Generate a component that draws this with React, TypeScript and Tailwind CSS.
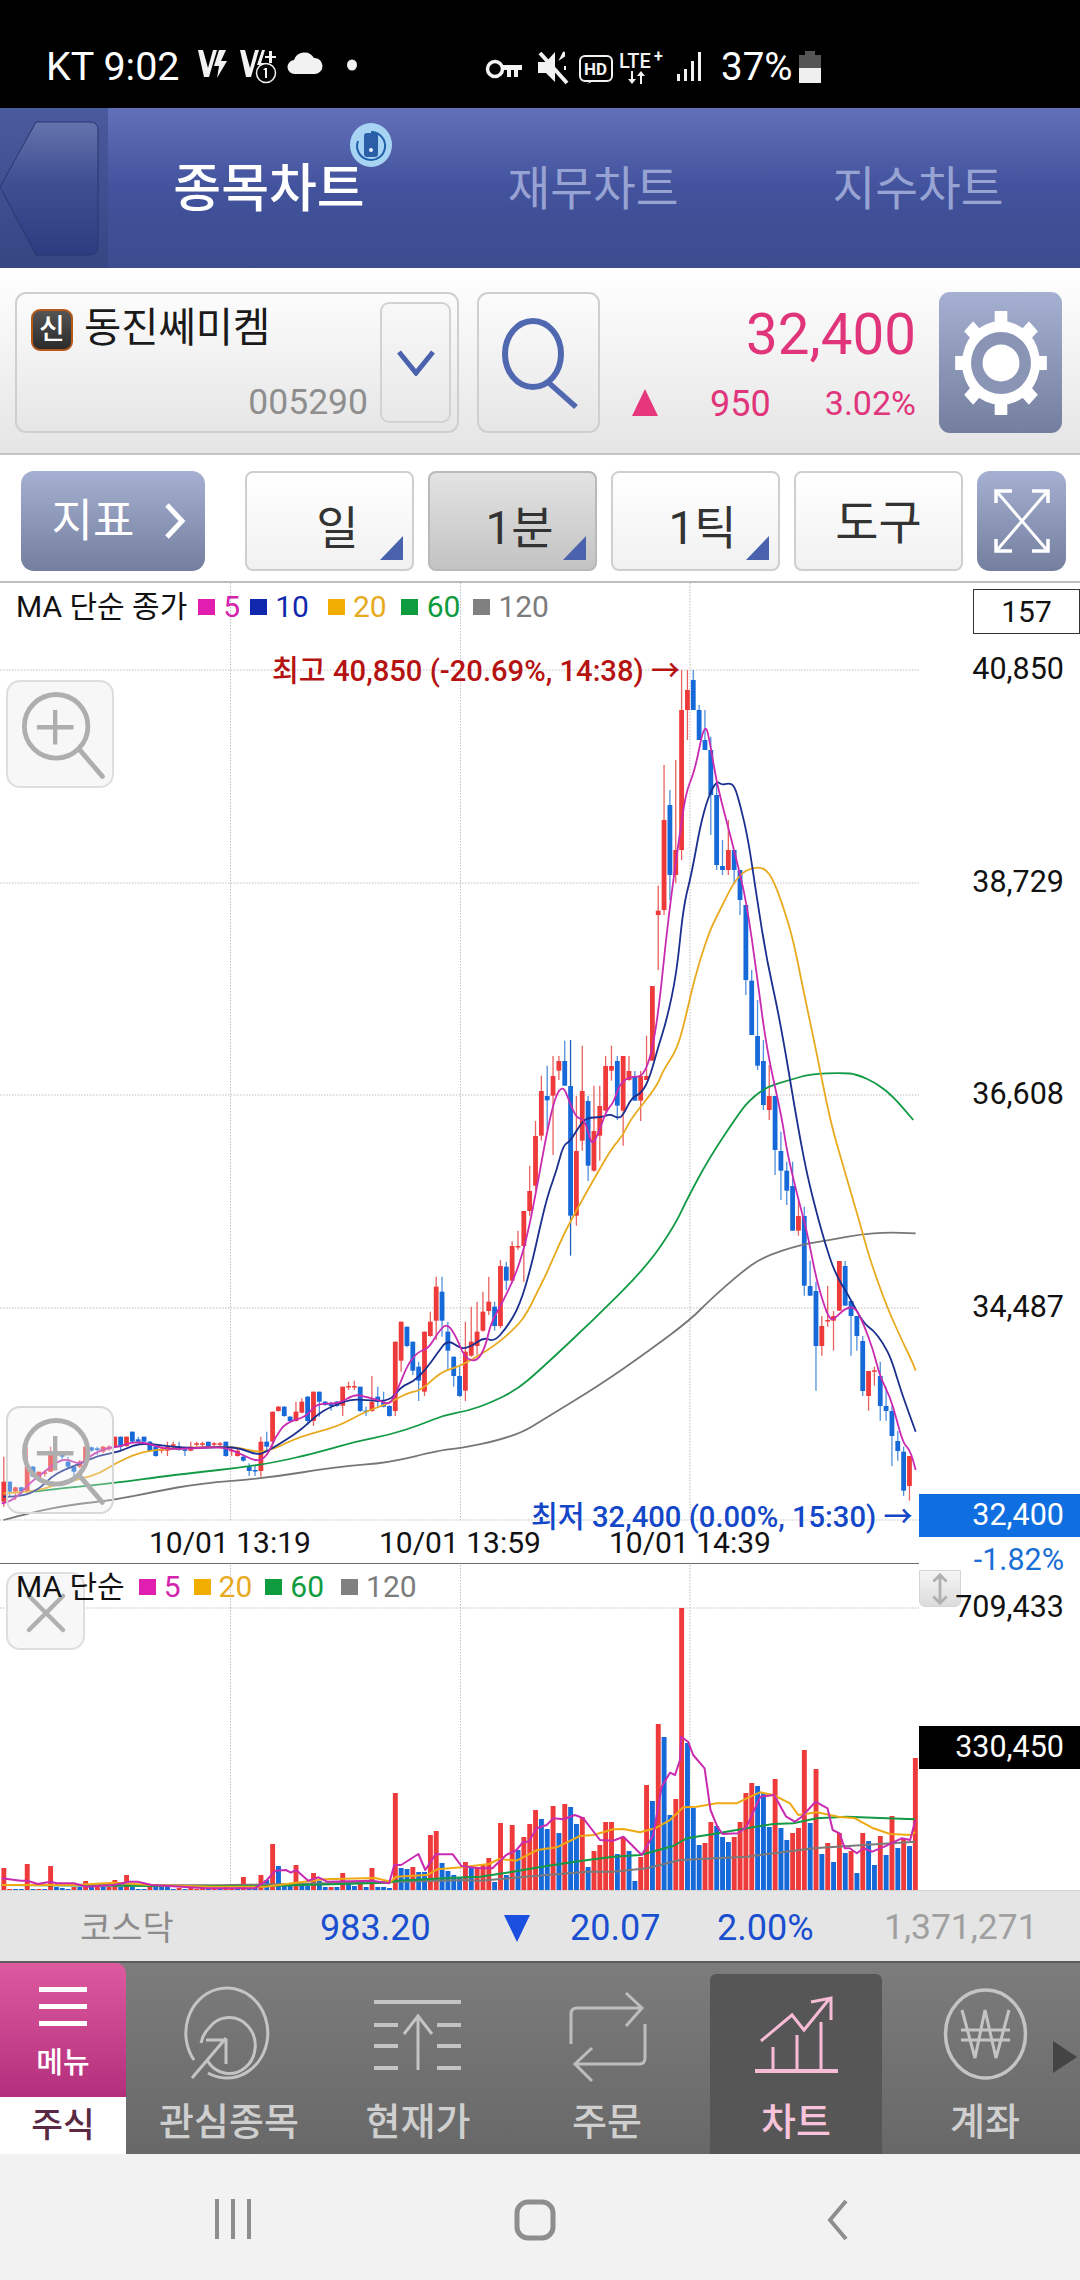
import React from 'react';

const FONT = "font-['Roboto','Noto_Sans_CJK_KR',sans-serif]";

// candle rows: [isRed, bodyTop, bodyBottom, wickTop, wickBottom], y = base + v / 3
type Row = [number, number, number, number, number];

const CANDLE_GROUPS: { base: number; rows: Row[] }[] = [
  {
    base: 1240,
    rows: [
      [1,725,785,650,800],[0,725,755,725,770],[1,742,755,740,780],[0,742,755,740,765],[1,680,755,620,760],
      [0,680,710,678,712],[1,695,715,695,720],[1,697,702,690,710],[1,637,695,620,695],[1,637,647,637,650],
      [0,637,650,637,660],[0,665,680,650,685],[0,680,695,680,710],[1,665,680,660,685],[1,620,665,620,670],
      [0,622,632,620,635],[0,625,630,620,645],[1,620,635,618,640],[1,620,628,615,632],[1,590,620,590,622],
      [0,590,620,590,630],[1,590,618,590,620],[0,575,605,575,608],[0,598,605,590,610],[0,590,605,590,608],
      [0,605,633,603,636],[0,620,648,618,650],[1,628,632,620,640],[1,620,632,605,648],[1,613,617,605,625],
      [0,620,630,605,632],[0,628,632,625,648],[1,620,632,605,634],[1,610,614,605,620],[1,610,614,605,620],
      [0,605,618,605,620],[1,610,614,606,618],[1,610,614,606,618],[0,605,648,605,650],[1,630,634,620,648],
      [1,632,648,625,650],[0,650,662,645,665],[0,680,693,670,708],[0,690,694,675,708],[1,605,693,590,710],
      [0,605,620,575,630],[1,515,605,515,620],[1,500,513,498,515],[0,500,528,498,530],[0,530,543,528,545],
      [1,515,543,485,545],[1,485,518,475,520],[0,470,543,468,555],[1,455,543,455,558],[0,455,485,455,530],
      [0,485,495,483,497],[0,490,498,485,512],[0,485,498,483,500],[1,440,497,440,528],[1,438,442,425,450],
      [1,438,442,422,450],[0,440,513,440,515],[0,512,516,500,528],[1,485,513,408,515],[0,470,485,440,500],
      [0,485,500,455,502],[0,498,528,496,530],[1,305,513,305,528],[1,245,362,245,395],[0,260,318,260,322],
      [0,305,392,305,405],[0,380,422,365,483],[1,275,455,275,468],[1,245,288,215,290],[1,140,242,110,300],
      [0,155,242,110,290],[0,275,332,245,390],[0,350,408,350,440],[0,408,468,380,470],[1,335,452,245,483],
      [1,305,347,200,350],[1,275,318,185,345],[1,215,272,155,275],[1,185,213,110,225],[0,200,258,185,272],
    ],
  },
  {
    base: 1020,
    rows: [
      [1,738,918,720,925],[0,740,782,725,810],[1,678,782,664,790],[1,678,682,632,690],[1,573,678,573,785],
      [1,513,573,437,587],[1,348,497,303,512],[1,213,347,167,362],[0,228,241,137,330],[1,168,227,108,405],
      [1,123,152,108,180],[0,123,197,62,197],[0,198,587,60,707],[1,393,587,228,617],[1,213,362,77,392],
      [0,243,437,228,483],[1,333,452,197,455],[1,258,347,197,422],[1,138,272,108,275],[1,138,152,77,182],
      [0,123,257,108,300],[1,108,272,108,377],[1,153,180,108,182],[0,168,242,153,242],[1,168,242,153,303],
      [1,168,180,47,180],
    ],
  },
  {
    base: 640,
    rows: [
      [1,1038,1262,1038,1262],[1,812,825,737,990],[1,540,810,375,825],[0,495,705,450,780],[1,630,705,360,730],
      [1,210,630,90,660],[1,150,210,90,300],[0,120,210,90,210],[0,210,300,195,300],[0,300,330,210,330],
      [0,330,465,290,585],[0,465,675,430,690],[0,678,690,600,705],[1,630,690,540,705],[0,630,690,630,730],
      [0,690,780,690,825],[0,795,1020,795,1065],[0,1022,1185,990,1185],[0,1188,1277,1080,1290],[0,1263,1395,1200,1410],
      [1,1368,1410,1275,1440],[0,1368,1530,1370,1605],
    ],
  },
  {
    base: 1100,
    rows: [
      [0,153,212,95,300],[0,212,272,185,315],[0,258,392,185,392],[1,348,392,302,407],[0,348,557,320,587],
      [0,558,587,482,587],[0,573,738,545,872],[1,678,738,648,767],[1,660,664,558,680],[1,648,662,633,752],
      [1,483,632,483,632],[0,498,617,483,617],[0,603,648,603,767],[0,648,708,648,752],[0,723,873,708,888],
      [1,813,888,813,932],[1,811,815,800,857],[0,828,918,785,962],[0,918,933,860,962],[0,933,1008,918,1098],
      [0,1023,1053,993,1082],[0,1055,1172,1040,1188],[1,1068,1158,1068,1202],
    ],
  },
];

const CANDLES = CANDLE_GROUPS.flatMap((g) =>
  g.rows.map((r) => ({
    red: r[0] === 1,
    top: g.base + r[1] / 3,
    bottom: g.base + r[2] / 3,
    wickTop: g.base + r[3] / 3,
    wickBottom: g.base + r[4] / 3,
  })),
);

// volume bar tops, minus = blue
const VOLUME_TOPS: number[] = [
  1868,1889,-1889,-1889,1864,-1889,1889,-1889,1866,-1887,-1888,-1889,1887,-1887,1881,-1887,1887,-1887,1887,1880,
  -1887,1875,-1887,-1889,-1889,1885,-1885,-1887,-1887,-1889,1888,-1889,1888,1889,1889,-1889,1889,-1889,1887,1888,
  -1887,1877,-1888,-1888,1875,-1880,1844,-1866,-1885,-1886,1865,-1883,-1886,1873,-1881,-1887,1887,-1887,1873,-1881,
  -1886,1881,-1887,1868,-1887,-1887,-1888,1793,-1868,-1869,1867,-1872,-1872,1835,1831,-1863,-1871,-1875,-1877,1862,
  -1867,1867,1865,1858,-1882,1823,-1875,1825,-1850,1837,1824,1810,-1819,-1829,1806,-1833,1804,-1807,-1824,1817,
  -1867,1851,1845,1822,1822,-1854,1837,-1851,-1881,1857,1785,-1801,1724,-1737,-1815,1799,1608,-1743,-1808,-1845,
  1843,1822,-1826,-1837,-1842,1837,1822,1793,1783,-1786,-1793,-1827,1779,-1828,-1840,1833,1828,1750,-1823,1769,
  -1854,1843,-1862,1833,-1853,1851,-1873,1833,-1841,-1865,1836,-1855,1816,-1848,1839,-1846,1758,
];

const barX = (i: number) => 3.8 + 5.843 * i;

// flat X,Y lists into "x,y" strings
const trace = (ox: number, sx: number, oy: number, list: number[]) => {
  const out: string[] = [];
  for (let i = 0; i < list.length; i += 2) {
    out.push(`${(ox + list[i] / sx).toFixed(1)},${(oy + list[i + 1] / 3).toFixed(1)}`);
  }
  return out.join(' ');
};

// rounds the corners of a point list with quadratic curves through the midpoints
const smooth = (points: string) => {
  const p = points.split(' ').map((s) => s.split(',').map(Number));
  let d = `M${p[0][0]} ${p[0][1]}`;
  for (let i = 1; i < p.length - 1; i++) {
    const mx = (p[i][0] + p[i + 1][0]) / 2;
    const my = (p[i][1] + p[i + 1][1]) / 2;
    d += `Q${p[i][0]} ${p[i][1]} ${mx.toFixed(1)} ${my.toFixed(1)}`;
  }
  const last = p[p.length - 1];
  return `${d}L${last[0]} ${last[1]}`;
};

const MA5 = [
  trace(0, 2.904, 1240, [5,790,30,785,60,760,90,725,130,695,165,665,195,657,235,675,270,640,320,622,350,620,385,605,430,610,480,628,560,625,650,620,700,642,745,665,775,650,800,590,830,548,890,530,915,495,950,490,985,490,1030,463,1060,470,1100,480,1130,495,1150,460,1185,370,1215,335,1245,325,1270,280,1298,248,1325,290,1350,355,1385,365,1410,320,1425,250,1460,185]),
  trace(400, 3, 1020, [340,780,365,710,390,610,415,480,440,340,465,230,490,195,510,250,530,295,555,298,575,380,595,340,620,270,640,250,660,190,690,170,735,170]),
  trace(500, 3, 640, [470,1170,505,830,545,540,560,450,585,390,615,240,632,320,650,430,680,545,710,660,740,790,770,1000,800,1230,845,1430]),
  trace(720, 3, 1100, [200,150,230,280,260,390,285,520,310,610,330,660,345,655,375,625,405,620,430,670,460,750,480,830,510,890,530,960,550,1030,570,1050,587,1110]),
].join(' ');

const MA10 = [
  trace(0, 2.904, 1240, [10,770,60,770,110,750,150,710,185,690,235,670,290,645,350,635,395,612,440,612,500,620,560,625,650,620,700,625,745,645,775,635,830,600,880,565,920,525,960,500,1020,478,1060,480,1130,485,1165,440,1200,425,1235,390,1270,340,1300,298,1340,328,1370,318,1405,292,1435,305,1470,265,1510,195,1545,70]),
  trace(400, 3, 1020, [420,620,445,520,470,450,490,375,510,365,540,315,560,293,605,292,630,282,655,295,670,285,695,232,725,220,750,170,775,80,800,0]),
  trace(500, 3, 640, [530,1000,550,800,575,700,600,560,625,470,650,422,665,435,685,430,703,435,722,500,745,600,770,770,800,960,840,1140,890,1440]),
  trace(720, 3, 1100, [260,220,290,340,315,430,345,520,385,585,430,670,460,690,490,730,515,780,545,880,587,995]),
].join(' ');

const MA20 = [
  trace(0, 2.904, 1240, [10,760,100,755,160,735,240,715,290,700,335,670,400,640,450,630,520,625,620,620,690,622,750,637,790,630,870,590,980,560,1060,515,1130,490,1180,460,1225,450,1280,395,1340,378,1440,315,1500,260,1530,220,1568,140]),
  trace(400, 3, 1020, [440,760,490,645,530,570,580,480,635,385,670,345,690,300,770,200,790,150,830,90,855,0]),
  trace(500, 3, 640, [575,1050,600,960,630,870,660,810,700,730,730,695,765,682,795,685,820,720,850,800,880,900,910,1050,950,1240,990,1440]),
  trace(720, 3, 1100, [370,200,420,370,450,480,500,620,550,730,570,770,587,812]),
].join(' ');

const MA60 = [
  trace(0, 2.904, 1240, [100,755,200,742,330,730,500,705,770,675,950,630,1030,605,1130,585,1220,555,1290,525,1360,512,1420,490,1500,450,1568,390]),
  trace(400, 3, 1020, [580,900,740,740,825,615,865,530,930,410,1020,275]),
  trace(500, 3, 640, [750,1380,800,1340,870,1320,930,1302,1030,1298,1070,1303,1130,1330,1180,1370,1240,1440]),
].join(' ');

const MA120 = [
  trace(0, 2.904, 1240, [10,840,100,815,200,795,330,780,450,755,580,730,770,715,980,680,1130,668,1280,630,1340,625,1450,600,1520,575,1568,545]),
  '600,1385 650,1350',
  trace(400, 3, 1020, [870,900,930,840,1020,760]),
  trace(720, 3, 1100, [130,470,240,435,340,418,420,403,500,397,587,400]),
].join(' ');

const VOL5 = [
  trace(0, 2.904, 1540, [5,1015,60,1022,79,1022,110,1032,147,1025,165,1030,215,1030,250,1040,330,1035,375,1025,400,1025,440,1035,600,1045,740,1045,770,1025,800,992,830,990,845,998,860,990,895,1022,925,1012,950,1025,1080,1022,1130,1030,1145,975,1165,975,1215,942,1235,990,1265,943,1315,943,1340,978,1390,985,1430,985,1470,945,1500,930,1520,905,1535,905]),
  trace(480, 3, 1760, [170,205,200,195,220,175,250,178,285,165,310,175,360,240,400,242,430,230,450,250,485,285,520,225,545,80,570,38,585,45,600,0]),
  trace(540, 2.904, 1540, [410,590,430,605,445,645,478,685,495,810,515,860,530,882,575,880,600,860,640,770,680,765,715,830,740,845,760,830,800,785,835,805,850,870,870,880,885,925,900,925,920,940,940,925,965,935,1000,920,1050,895,1075,900,1090,840]),
].join(' ');

const VOL20 = [
  trace(0, 2.904, 1540, [5,1035,220,1035,330,1028,440,1035,620,1040,770,1040,860,1028,940,1018,1090,1014,1135,1025,1150,1010,1240,1005,1270,988,1340,982,1420,972,1450,957,1500,962,1560,930]),
  trace(480, 3, 1760, [230,262,300,228,340,225,400,208,430,207,480,217,525,205,570,180,610,142,650,140,710,130,770,130,800,115,840,97,880,105,930,130,955,165,1010,157,1075,170,1125,175,1180,205,1230,222,1295,225,1305,215]),
].join(' ');

const VOL60 = [
  trace(0, 2.904, 1540, [5,1035,440,1038,770,1038,1130,1028,1150,1022,1350,1012]),
  trace(480, 3, 1760, [0,350,80,338,200,318,300,303,400,290,480,285,580,258,620,235,700,222,800,205,880,192,940,190,1010,175,1100,170,1200,174,1305,178]),
].join(' ');

const VOL120 = [
  trace(0, 2.904, 1540, [5,1035,640,1036,1130,1026,1350,1020]),
  trace(480, 3, 1760, [0,362,200,345,320,335,400,335,500,325,600,300,800,290,1000,265,1305,245]),
].join(' ');

function StatusBar() {
  return (
    <div className="flex h-[108px] items-center bg-black pl-[46px] pt-[26px] text-white">
      <span className="w-[150px] text-[39.5px] leading-none">KT 9:02</span>
      <svg viewBox="196 48 170 44" className="h-[44px] w-[170px]" fill="#f2f2f2">
        <path d="M198 53h5l5 18 5-18h4l-8 27h-5z" />
        <path d="M219 53h7l-5 11h6l-10 17 2-12h-5z" />
        <path d="M240 53h5l5 18 5-18h4l-8 27h-5z" />
        <path d="M262 53l-5 15h5l-5 9 9-11h-5l4-13z" />
        <path d="M269 54h3v5h4v2h-4v5h-3v-5h-4v-2h4z" />
        <circle cx="266" cy="76" r="9.5" fill="#000" stroke="#f2f2f2" strokeWidth="1.5" />
        <path d="M265 71h2v10h-2zM263 73l2-2v2z" />
        <path d="M295 77a7 7 0 0 1-1-14 11 11 0 0 1 20-2 8 8 0 0 1 1 16z" />
        <ellipse cx="352" cy="68" rx="5" ry="5.5" />
      </svg>
      <svg viewBox="486 44 226 46" className="ml-[117px] h-[46px] w-[226px]" fill="#f2f2f2">
        <circle cx="498" cy="69" r="7.5" fill="none" stroke="#f2f2f2" strokeWidth="3.5" />
        <path d="M505 65h20v5h-4v7h-4v-7h-3v7h-4v-7h-5z" />
        <path d="M541 62h8l9-10v30l-9-9h-8z" />
        <path d="M567 52v4l-3 2 3-6zM568 66v4" stroke="#f2f2f2" strokeWidth="2" />
        <path d="M543 53l27 30" stroke="#f2f2f2" strokeWidth="4" />
        <rect x="583" y="56" width="32" height="25" rx="5" fill="none" stroke="#f2f2f2" strokeWidth="2" />
        <path d="M590 84l5-4h4z" />
        <text x="587" y="75" fontSize="17" fontFamily="Roboto" fontWeight="700">HD</text>
        <text x="622" y="68" fontSize="20" fontFamily="Roboto" fontWeight="500">LTE</text>
        <text x="657" y="62" fontSize="16" fontFamily="Roboto" fontWeight="700">+</text>
        <path d="M634 71h2v8h3l-4 5-4-5h3zM643 84h2v-8h3l-4-5-4 5h3z" />
        <path d="M680 74h3v7h-3zM687 69h3v12h-3zM694 61h3v20h-3zM701 52h3v29h-3z" />
      </svg>
      <span className="ml-[12px] w-[78px] text-[38.5px] leading-none">37%</span>
      <div className="flex h-[32px] w-[22px] flex-col">
        <div className="mx-auto h-[5px] w-[10px] bg-[#555]" />
        <div className="h-[19px] bg-[#555]" />
        <div className="h-[21px] bg-[#efefef]" />
      </div>
    </div>
  );
}

function TabHeader() {
  return (
    <div className="flex h-[160px] bg-gradient-to-b from-[#6270b9] via-[#42529c] to-[#3c4c8f]">
      <div className="w-[108px] bg-gradient-to-b from-[#4a5a9e] to-[#354683]">
        <svg viewBox="0 108 108 160" className="h-[160px] w-[108px]">
          <defs>
            <linearGradient id="backBtn" x1="0" y1="0" x2="0" y2="1">
              <stop offset="0" stopColor="#6572ac" />
              <stop offset="0.45" stopColor="#3f4f92" />
              <stop offset="1" stopColor="#2b3d80" />
            </linearGradient>
          </defs>
          <path d="M0 187L36 122h54q8 0 8 8v117q0 8-8 8H36z" fill="url(#backBtn)" stroke="#2a3670" />
        </svg>
      </div>
      <div className="relative flex w-[322px] items-center justify-center pt-[3px] text-[52px] font-medium leading-none text-white">
        종목차트
        <svg viewBox="0 0 42 44" className="absolute left-[242px] top-[15px] h-[44px] w-[42px]">
          <ellipse cx="21" cy="22" rx="21" ry="22" fill="#a8d4f4" />
          <path d="M8 18a14 14 0 1 0 13-9" fill="none" stroke="#1f5ea8" strokeWidth="2" />
          <rect x="14" y="10" width="14" height="24" rx="3" fill="#2a5fa8" />
          <circle cx="21" cy="27" r="2" fill="#e8f2ff" />
        </svg>
      </div>
      <div className="flex w-[326px] items-center justify-center pt-[3px] text-[46.5px] leading-none text-[#97a3d2]">재무차트</div>
      <div className="flex w-[324px] items-center justify-center pt-[3px] text-[46.5px] leading-none text-[#97a3d2]">지수차트</div>
    </div>
  );
}

function StockRow() {
  return (
    <div className="flex h-[187px] items-start border-b-2 border-[#c4c4c4] bg-gradient-to-b from-white to-[#e5e5e5] pl-[15px] pt-[24px]">
      <div className="relative h-[141px] w-[444px] rounded-[11px] border-2 border-[#cfcfcf] bg-gradient-to-b from-[#fcfcfc] to-[#e6e6e6]">
        <div className="absolute left-[14px] top-[15px] flex h-[42px] w-[42px] items-center justify-center rounded-[9px] border-2 border-[#b5591a] bg-gradient-to-b from-[#555] to-[#2b2b2b] text-[28px] font-medium leading-none text-white">
          신
        </div>
        <span className="absolute left-[67px] top-[14px] text-[40.5px] leading-none text-[#1a1a1a]">동진쎄미켐</span>
        <span className="absolute right-[89px] top-[91px] text-[35.5px] leading-none text-[#8e8e8e]">005290</span>
        <div className="absolute left-[363px] top-[8px] flex h-[121px] w-[71px] items-center justify-center rounded-[9px] border-2 border-[#d2d2d2] bg-gradient-to-b from-[#f8f8f8] to-[#e8e8e8]">
          <svg viewBox="0 0 40 26" className="h-[26px] w-[40px]">
            <path d="M3 2l17 21L37 2" fill="none" stroke="#4a62ad" strokeWidth="5" />
          </svg>
        </div>
      </div>
      <div className="ml-[18px] flex h-[141px] w-[123px] items-center justify-center rounded-[11px] border-2 border-[#cfcfcf] bg-gradient-to-b from-[#fcfcfc] to-[#e6e6e6]">
        <svg viewBox="0 0 84 96" className="h-[96px] w-[84px]">
          <ellipse cx="36" cy="39" rx="28" ry="33" fill="none" stroke="#5068b0" strokeWidth="6" />
          <path d="M52 68l27 24" stroke="#5068b0" strokeWidth="5.5" />
        </svg>
      </div>
      <div className="relative h-[141px] w-[339px]">
        <span className="absolute right-[23px] top-[15px] text-[56.5px] leading-none text-[#e0357a]">32,400</span>
        <svg viewBox="0 0 26 27" className="absolute left-[32px] top-[97px] h-[27px] w-[26px]">
          <path d="M13 0l13 27H0z" fill="#e6377c" />
        </svg>
        <span className="absolute left-[110px] top-[94px] text-[36px] leading-none text-[#e0357a]">950</span>
        <span className="absolute right-[23px] top-[94px] text-[34px] leading-none text-[#e0357a]">3.02%</span>
      </div>
      <div className="flex h-[141px] w-[123px] items-center justify-center rounded-[11px] bg-gradient-to-b from-[#a6b0d2] to-[#747f9f]">
        <svg viewBox="-47 -53 94 106" className="h-[106px] w-[94px]">
          <g fill="#fff" transform="scale(0.95 1.08)">
            {[0, 45, 90, 135, 180, 225, 270, 315].map((a) => (
              <rect key={a} x="-6.5" y="-48" width="13" height="96" transform={`rotate(${a})`} />
            ))}
          </g>
          <ellipse rx="39" ry="42" fill="#fff" />
          <ellipse rx="30" ry="31" fill="#8a95b6" />
          <circle r="18.5" fill="#fff" />
        </svg>
      </div>
    </div>
  );
}

function Corner() {
  return (
    <svg viewBox="0 0 23 24" className="absolute bottom-[9px] right-[9px] h-[24px] w-[23px]">
      <path d="M23 0v24H0z" fill="#4a62ad" />
    </svg>
  );
}

function ToolRow() {
  return (
    <div className="flex h-[128px] items-start border-b-2 border-[#bdbdbd] bg-white pl-[21px] pt-[16px]">
      <div className="flex h-[100px] w-[184px] items-center justify-center gap-[30px] rounded-[13px] bg-gradient-to-b from-[#a6b0d2] to-[#747f9f] pl-[12px] text-white">
        <span className="text-[45px] leading-none">지표</span>
        <svg viewBox="0 0 22 36" className="h-[36px] w-[22px]">
          <path d="M3 2l15 16L3 34" fill="none" stroke="#fff" strokeWidth="5" />
        </svg>
      </div>
      <div className="relative ml-[40px] flex h-[100px] w-[169px] items-center justify-center rounded-[8px] border-2 border-[#cfcfcf] bg-gradient-to-b from-white to-[#f1f1f1] pl-[16px] pt-[14px] text-[46px] leading-none text-[#333]">
        일
        <Corner />
      </div>
      <div className="relative ml-[14px] flex h-[100px] w-[169px] items-center justify-center rounded-[8px] border-2 border-[#b9b9b9] bg-gradient-to-b from-[#e3e3e3] to-[#c3c3c3] pl-[14px] pt-[14px] text-[46px] leading-none text-[#333]">
        1분
        <Corner />
      </div>
      <div className="relative ml-[14px] flex h-[100px] w-[169px] items-center justify-center rounded-[8px] border-2 border-[#cfcfcf] bg-gradient-to-b from-white to-[#f1f1f1] pl-[14px] pt-[14px] text-[46px] leading-none text-[#333]">
        1틱
        <Corner />
      </div>
      <div className="ml-[14px] flex h-[100px] w-[169px] items-center justify-center rounded-[8px] border-2 border-[#cfcfcf] bg-gradient-to-b from-white to-[#f1f1f1] pt-[2px] text-[47px] leading-none text-[#333]">
        도구
      </div>
      <div className="ml-[14px] flex h-[100px] w-[89px] items-center justify-center rounded-[13px] bg-gradient-to-b from-[#a6b0d2] to-[#747f9f]">
        <svg viewBox="0 0 56 64" className="h-[64px] w-[56px]">
          <g fill="none" stroke="#fff" strokeWidth="3.5">
            <path d="M2 14V2h16M38 2h16v12M54 50v12H38M18 62H2V50" />
            <path d="M4 4l48 56M52 4L4 60" strokeWidth="3" />
          </g>
        </svg>
      </div>
    </div>
  );
}

function Grid({ ys, y1, y2 }: { ys: number[]; y1: number; y2: number }) {
  return (
    <g stroke="#bdbdbd" strokeWidth="1" strokeDasharray="1.5 1.5">
      {ys.map((y) => (
        <line key={y} x1="0" x2="919" y1={y} y2={y} />
      ))}
      {[230.5, 460.5, 690].map((x) => (
        <line key={x} x1={x} x2={x} y1={y1} y2={y2} />
      ))}
    </g>
  );
}

function Magnifier() {
  return (
    <svg viewBox="0 0 108 108" className="h-[104px] w-[104px]">
      <ellipse cx="50" cy="46" rx="33" ry="33" fill="none" stroke="#aeaeae" strokeWidth="5" />
      <path d="M30 47h38M49 29v36" stroke="#aeaeae" strokeWidth="4.5" />
      <path d="M74 70l24 28" stroke="#aeaeae" strokeWidth="5" strokeLinecap="round" />
    </svg>
  );
}

function PricePanel() {
  return (
    <div className="relative z-10 h-[981px] bg-white">
      <svg viewBox="0 583 1080 981" className="absolute inset-0 h-full w-full">
        <Grid ys={[670, 883, 1095, 1308, 1520]} y1={583} y2={1520} />
        {CANDLES.map((c, i) => {
          const x = barX(i);
          const dark = i === 97;
          return (
            <g key={i}>
              <line
                x1={x}
                x2={x}
                y1={c.wickTop}
                y2={c.wickBottom}
                stroke={c.red ? '#e8625f' : dark ? '#1b5fb8' : '#4f8fdc'}
                strokeWidth="1.3"
              />
              <rect
                x={x - 2.4}
                y={c.top}
                width="4.8"
                height={Math.max(c.bottom - c.top, 1.5)}
                fill={c.red ? '#ee3a3a' : '#1669d8'}
              />
            </g>
          );
        })}
        <g fill="none" strokeWidth="1.8" strokeLinejoin="round">
          <path d={smooth(MA120)} stroke="#777777" />
          <path d={smooth(MA60)} stroke="#129a45" />
          <path d={smooth(MA20)} stroke="#e8aa1f" />
          <path d={smooth(MA10)} stroke="#1b2f8e" />
          <path d={smooth(MA5)} stroke="#c92bb0" />
        </g>
        <line x1="0" x2="919" y1="1564" y2="1564" stroke="#6b6b6b" strokeWidth="2" />
      </svg>

      <div className="absolute left-[16px] top-[24px] flex -translate-y-1/2 items-center text-[30px] leading-none text-[#111]">
        <span className="mr-[11px]">MA 단순 종가</span>
        <span className="mr-[8px] h-[16px] w-[17px] bg-[#e01eb0]" />
        <span className="mr-[10px] text-[#d324ad]">5</span>
        <span className="mr-[8px] h-[16px] w-[17px] bg-[#0f28ae]" />
        <span className="mr-[19px] text-[#0f28ae]">10</span>
        <span className="mr-[8px] h-[16px] w-[17px] bg-[#f2ae00]" />
        <span className="mr-[14px] text-[#e8aa1f]">20</span>
        <span className="mr-[9px] h-[16px] w-[17px] bg-[#0e9c3e]" />
        <span className="mr-[13px] text-[#0e9c3e]">60</span>
        <span className="mr-[8px] h-[16px] w-[17px] bg-[#808080]" />
        <span className="text-[#7c7c7c]">120</span>
      </div>

      <div className="absolute left-[973px] top-[6px] flex h-[45px] w-[107px] items-center justify-center border border-[#333] bg-white text-[30px] leading-none text-[#111]">
        157
      </div>

      <span className="absolute left-[272px] top-[89px] -translate-y-1/2 whitespace-nowrap text-[29.2px] font-medium leading-none text-[#b51212]">
        최고 40,850 (-20.69%, 14:38) →
      </span>

      <div className="absolute left-[6px] top-[97px] flex h-[108px] w-[108px] items-center justify-center rounded-[14px] border-2 border-[#dedede] bg-[#f7f7f7]">
        <Magnifier />
      </div>
      <div className="absolute left-[6px] top-[823px] flex h-[108px] w-[108px] items-center justify-center rounded-[14px] border-2 border-[#d8d8d8] bg-[#eeeeee]/30">
        <Magnifier />
      </div>

      <span className="absolute right-[16px] top-[86px] -translate-y-1/2 text-[30.5px] leading-none text-[#111]">40,850</span>
      <span className="absolute right-[16px] top-[299px] -translate-y-1/2 text-[30.5px] leading-none text-[#111]">38,729</span>
      <span className="absolute right-[16px] top-[511px] -translate-y-1/2 text-[30.5px] leading-none text-[#111]">36,608</span>
      <span className="absolute right-[16px] top-[724px] -translate-y-1/2 text-[30.5px] leading-none text-[#111]">34,487</span>

      <span className="absolute left-[531px] top-[935px] -translate-y-1/2 whitespace-nowrap text-[29.2px] font-medium leading-none text-[#1447c8]">
        최저 32,400 (0.00%, 15:30) →
      </span>
      <div className="absolute left-[919px] top-[911px] flex h-[43px] w-[161px] items-center justify-end bg-[#0f6fe0] pr-[16px] text-[30.5px] leading-none text-white">
        32,400
      </div>
      <span className="absolute right-[16px] top-[977px] -translate-y-1/2 text-[30.5px] leading-none text-[#1a6fd6]">-1.82%</span>

      <span className="absolute left-[149px] top-[960px] -translate-y-1/2 whitespace-nowrap text-[30px] leading-none text-[#111]">10/01 13:19</span>
      <span className="absolute left-[379px] top-[960px] -translate-y-1/2 whitespace-nowrap text-[30px] leading-none text-[#111]">10/01 13:59</span>
      <span className="absolute left-[609px] top-[960px] -translate-y-1/2 whitespace-nowrap text-[30px] leading-none text-[#111]">10/01 14:39</span>
    </div>
  );
}

function VolumePanel() {
  return (
    <div className="relative h-[326px] bg-white">
      <svg viewBox="0 1564 1080 326" className="absolute inset-0 h-full w-full">
        <Grid ys={[1608]} y1={1565} y2={1890} />
        {VOLUME_TOPS.map((t, i) => (
          <rect
            key={i}
            x={barX(i) - 2.4}
            y={Math.abs(t)}
            width="4.9"
            height={1890 - Math.abs(t)}
            fill={t > 0 ? '#ee3a3a' : '#1669d8'}
          />
        ))}
        <g fill="none" strokeWidth="2" strokeLinejoin="round">
          <polyline points={VOL120} stroke="#7a7a7a" />
          <polyline points={VOL60} stroke="#129a45" />
          <polyline points={VOL20} stroke="#eeaa15" />
          <polyline points={VOL5} stroke="#c92bb0" />
        </g>
      </svg>

      <div className="absolute left-[6px] top-[8px] flex h-[78px] w-[79px] items-center justify-center rounded-[14px] border-2 border-[#dedede] bg-[#f7f7f7]">
        <svg viewBox="0 0 40 40" className="mt-[4px] h-[40px] w-[40px]">
          <path d="M3 3l34 34M37 3L3 37" stroke="#b0b0b0" strokeWidth="4.5" strokeLinecap="round" />
        </svg>
      </div>

      <div className="absolute left-[16px] top-[23px] flex -translate-y-1/2 items-center text-[30px] leading-none text-[#111]">
        <span className="mr-[14px]">MA 단순</span>
        <span className="mr-[8px] h-[16px] w-[17px] bg-[#e01eb0]" />
        <span className="mr-[13px] text-[#d324ad]">5</span>
        <span className="mr-[8px] h-[16px] w-[17px] bg-[#f2ae00]" />
        <span className="mr-[13px] text-[#e8aa1f]">20</span>
        <span className="mr-[8px] h-[16px] w-[17px] bg-[#0e9c3e]" />
        <span className="mr-[17px] text-[#0e9c3e]">60</span>
        <span className="mr-[8px] h-[16px] w-[17px] bg-[#808080]" />
        <span className="text-[#7c7c7c]">120</span>
      </div>

      <div className="absolute left-[919px] top-[6px] flex h-[37px] w-[42px] items-center justify-center rounded-b-[6px] border border-[#d4d4d4] bg-gradient-to-b from-[#f5f5f5] to-[#dcdcdc]">
        <svg viewBox="0 0 20 34" className="h-[32px] w-[20px]">
          <path d="M10 2v30M3 9l7-7 7 7M3 25l7 7 7-7" fill="none" stroke="#b0b0b0" strokeWidth="3" />
        </svg>
      </div>

      <span className="absolute right-[16px] top-[43px] -translate-y-1/2 text-[30.5px] leading-none text-[#111]">709,433</span>
      <div className="absolute left-[919px] top-[162px] flex h-[43px] w-[161px] items-center justify-end bg-black pr-[16px] text-[30.5px] leading-none text-white">
        330,450
      </div>
    </div>
  );
}

function IndexBar() {
  return (
    <div className="flex h-[71px] items-center border-t border-[#d4d4d4] bg-[#e5e5e5] pt-[4px] leading-none">
      <span className="ml-[80px] w-[102px] text-[34px] text-[#8c8c8c]">코스닥</span>
      <span className="ml-[138px] w-[112px] text-[36px] text-[#1a4fd0]">983.20</span>
      <svg viewBox="0 0 26 27" className="ml-[72px] h-[27px] w-[26px]">
        <path d="M0 0h26L13 27z" fill="#1a4fe0" />
      </svg>
      <span className="ml-[40px] w-[92px] text-[36px] text-[#1a4fd0]">20.07</span>
      <span className="ml-[55px] w-[98px] text-[36px] text-[#1a4fd0]">2.00%</span>
      <span className="ml-[69px] text-[35.5px] text-[#a0a0a0]">1,371,271</span>
    </div>
  );
}

function NavItem({ label, icon, active }: { label: string; icon: React.ReactNode; active?: boolean }) {
  return (
    <div className={`mx-[8.5px] flex w-[172px] flex-col items-center rounded-t-[6px] pt-[6px] ${active ? 'bg-[#565656]' : ''}`}>
      {icon}
      <span className={`flex h-[64px] items-center text-[38px] font-medium leading-none ${active ? 'text-[#f8c4dc]' : 'text-[#cfcfcf]'}`}>{label}</span>
    </div>
  );
}

function BottomNav() {
  return (
    <div className="relative flex h-[193px] border-t-2 border-[#5c5c5c] bg-gradient-to-b from-[#7c7c7c] to-[#686868]">
      <div className="flex w-[126px] flex-col">
        <div className="flex h-[134px] flex-col items-center rounded-tr-[10px] bg-gradient-to-b from-[#dd5aa0] to-[#b42e7c] pt-[24px] text-white">
          <div className="h-[5px] w-[48px] bg-white" />
          <div className="mt-[12px] h-[5px] w-[48px] bg-white" />
          <div className="mt-[12px] h-[5px] w-[48px] bg-white" />
          <span className="mt-[23px] text-[29px] font-medium leading-none">메뉴</span>
        </div>
        <div className="flex h-[57px] items-center justify-center bg-white text-[34.5px] font-medium leading-none text-[#5a2a45]">주식</div>
      </div>
      <div className="flex pl-[8.5px] pt-[11px]">
        <NavItem
          label="관심종목"
          icon={
            <svg viewBox="169 1980 120 110" className="h-[110px] w-[120px]" fill="none" stroke="#c4c4c4" strokeWidth="3">
              <path d="M194 2060a41 45 0 1 1 14 13" />
              <path d="M207 2060a26 28 0 1 0 2-32 26 28 0 0 0-8 15" />
              <path d="M192 2078l34-40M206 2040h20v24" />
            </svg>
          }
        />
        <NavItem
          label="현재가"
          icon={
            <svg viewBox="358 1980 120 110" className="h-[110px] w-[120px]" fill="none" stroke="#c4c4c4" strokeWidth="4">
              <path d="M374 2002h87M374 2025h24M437 2025h24M374 2046h24M437 2046h24M374 2068h24M437 2068h24" />
              <path d="M418 2070v-54M404 2034l14-18 14 18" strokeWidth="3" />
            </svg>
          }
        />
        <NavItem
          label="주문"
          icon={
            <svg viewBox="547 1980 120 110" className="h-[110px] w-[120px]" fill="none" stroke="#bdbdbd" strokeWidth="3">
              <path d="M571 2044v-30q0-6 6-6h65M626 1993l16 15-16 18" />
              <path d="M645 2024v34q0 6-6 6h-63M592 2048l-17 16 17 17" />
            </svg>
          }
        />
        <NavItem
          active
          label="차트"
          icon={
            <svg viewBox="736 1980 120 110" className="h-[110px] w-[120px]" fill="none" stroke="#f6bcd6" strokeWidth="3">
              <path d="M755 2071h83" strokeWidth="4" />
              <path d="M773 2047v24M797 2035v36M821 2022v49" />
              <path d="M761 2041l31-26 12 15 26-32M811 2002l20-4v22" />
            </svg>
          }
        />
        <NavItem
          label="계좌"
          icon={
            <svg viewBox="925 1980 120 110" className="h-[110px] w-[120px]" fill="none" stroke="#c4c4c4" strokeWidth="3.5">
              <ellipse cx="985.5" cy="2034" rx="40" ry="44" />
              <path d="M962 2010l13 48 10-48 11 48 13-48M961 2030h49M961 2040h49" strokeWidth="3" />
            </svg>
          }
        />
      </div>
      <svg viewBox="0 0 27 32" className="absolute right-0 top-[78px] h-[32px] w-[27px]">
        <path d="M0 0l24 16L0 32z" fill="#444" />
      </svg>
    </div>
  );
}

function SystemNav() {
  return (
    <div className="flex h-[126px] items-start bg-[#f2f2f2] pl-[214px] pt-[45px]">
      <svg viewBox="0 0 38 40" className="h-[40px] w-[38px]">
        <path d="M3 0v40M19 0v40M35 0v40" stroke="#8e8e8e" strokeWidth="4" />
      </svg>
      <svg viewBox="0 0 42 42" className="ml-[262px] h-[42px] w-[42px]">
        <rect x="3" y="3" width="36" height="36" rx="11" fill="none" stroke="#8e8e8e" strokeWidth="5" />
      </svg>
      <svg viewBox="0 0 22 42" className="ml-[271px] h-[42px] w-[22px]">
        <path d="M19 2L3 21l16 19" fill="none" stroke="#8e8e8e" strokeWidth="4" />
      </svg>
    </div>
  );
}

export default function App() {
  return (
    <div className={`flex h-[2280px] w-[1080px] flex-col overflow-hidden bg-white ${FONT}`}>
      <StatusBar />
      <TabHeader />
      <StockRow />
      <ToolRow />
      <PricePanel />
      <VolumePanel />
      <IndexBar />
      <BottomNav />
      <SystemNav />
    </div>
  );
}
